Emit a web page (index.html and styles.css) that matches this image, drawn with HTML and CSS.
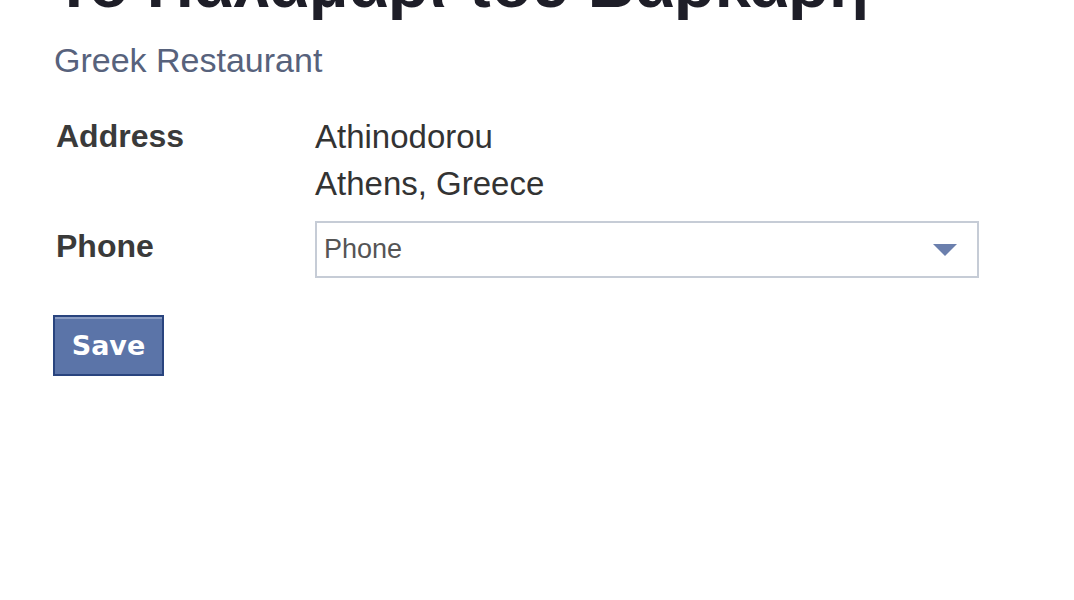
FILE: index.html
```html
<!DOCTYPE html>
<html lang="en">
<head>
<meta charset="utf-8">
<title>Το Παλαμάρι του Βαρκάρη</title>
<link rel="stylesheet" href="styles.css">
</head>
<body>
<div class="page">
  <h1 class="title">Το Παλαμάρι του Βαρκάρη</h1>
  <div class="category">Greek Restaurant</div>
  <div class="info">
    <div class="label">Address</div>
    <div class="value">Athinodorou<br>Athens, Greece</div>
    <div class="label label-phone">Phone</div>
    <div class="value">
      <div class="select">
        <span class="placeholder">Phone</span>
        <svg class="arrow" width="24" height="12" viewBox="0 0 24 12"><path d="M0 0H24L12 12Z" fill="#6b7fad"/></svg>
      </div>
    </div>
  </div>
  <button class="save">Save</button>
</div>
</body>
</html>
```
FILE: styles.css
```css
html, body {
  margin: 0;
  padding: 0;
  background: #fff;
}
.page {
  padding-left: 54px;
  font-family: "Liberation Sans", Arial, sans-serif;
  color: #333;
}
.title {
  margin: -47px 0 0 0;
  font-size: 65px;
  line-height: 64px;
  font-weight: bold;
  color: #1e1e28;
  white-space: nowrap;
}
.category {
  margin-top: 23px;
  font-size: 34px;
  line-height: 40px;
  color: #57627c;
}
.info {
  display: grid;
  grid-template-columns: 261px 664px;
  margin-top: 33px;
  row-gap: 14px;
}
.label {
  font-size: 32px;
  font-weight: bold;
  line-height: 47px;
  color: #3a3a3a;
  padding-left: 2px;
}
.label-phone {
  padding-top: 2px;
}
.value {
  font-size: 33px;
  line-height: 47px;
  color: #333;
}
.select {
  box-sizing: border-box;
  height: 57px;
  border: 2px solid #c6ccd6;
  display: flex;
  align-items: center;
  justify-content: space-between;
  padding: 0 20px 0 7px;
}
.placeholder {
  font-size: 27px;
  color: #555;
}
.arrow {
  display: block;
}
.save {
  display: block;
  margin-top: 37px;
  width: 111px;
  height: 61px;
  box-sizing: border-box;
  background: #5b74a8;
  border: 2px solid #29447e;
  box-shadow: inset 0 2px 0 #8a9cc2;
  color: #fff;
  font-family: "DejaVu Sans", Verdana, sans-serif;
  font-weight: bold;
  font-size: 27px;
  padding: 0;
  margin-left: -1px;
}
```
